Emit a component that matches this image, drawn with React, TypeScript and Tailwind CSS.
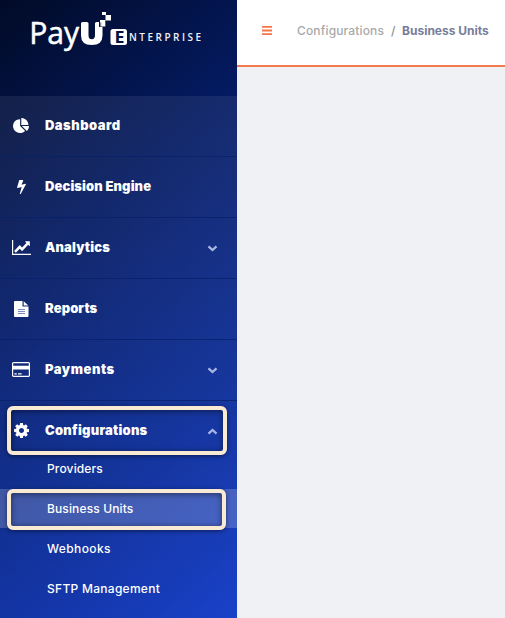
import React from "react";

type IconProps = { className: string; viewBox: string; d: string };

const Icon = ({ className, viewBox, d }: IconProps) => (
  <svg className={className} viewBox={viewBox} fill="currentColor" preserveAspectRatio="none">
    <path d={d} />
  </svg>
);

const PIE =
  "M768 890l546 546q-106 108-247.5 168t-298.5 60q-209 0-385.5-103t-279.5-279.5-103-385.5 103-385.5 279.5-279.5 385.5-103v762zm187 6h773q0 157-60 298.5t-168 247.5zm709-128h-768v-768q209 0 385.5 103t279.5 279.5 103 385.5z";
const BOLT =
  "M1333 566q18 20 7 44l-540 1157q-13 25-42 25-4 0-14-2-17-5-25.5-19t-4.5-30l197-808-406 101q-4 1-12 1-18 0-31-11-18-15-13-39l201-825q4-14 16-23t28-9h328q19 0 32 12.5t13 29.5q0 8-5 18l-171 463 396-98q8-2 12-2 19 0 34 15z";
const LINE =
  "M2048 1536v128h-2048v-1536h128v1408h1920zM1920 288v435q0 21-19.5 29.5t-35.5-7.5l-121-121-633 633q-10 10-23 10t-23-10l-233-233-416 416-192-192 585-585q10-10 23-10t23 10l233 233 464-464-121-121q-16-16-7.5-35.5t29.5-19.5h435q14 0 23 9t9 23z";
const CARD =
  "M1760 128q66 0 113 47t47 113v1216q0 66-47 113t-113 47h-1600q-66 0-113-47t-47-113v-1216q0-66 47-113t113-47h1600zm-1600 128q-13 0-22.5 9.5t-9.5 22.5v224h1664v-224q0-13-9.5-22.5t-22.5-9.5h-1600zm1600 1280q13 0 22.5-9.5t9.5-22.5v-608h-1664v608q0 13 9.5 22.5t22.5 9.5h1600zm-1504-128v-128h256v128h-256zm384 0v-128h384v128h-384z";
const COG =
  "M1152 896q0-106-75-181t-181-75-181 75-75 181 75 181 181 75 181-75 75-181zm512-109v222q0 12-8 23t-20 13l-185 28q-19 54-39 91 35 50 107 138 10 12 10 25t-9 23q-27 37-99 108t-94 71q-12 0-26-9l-138-108q-44 23-91 38-16 136-29 186-7 28-36 28h-222q-14 0-24.5-8.5t-11.5-21.5l-28-184q-49-16-90-37l-141 107q-10 9-25 9-14 0-25-11-126-114-165-168-7-10-7-23 0-12 8-23 15-21 51-66.5t54-70.5q-27-50-41-99l-183-27q-13-2-21-12.5t-8-23.5v-222q0-12 8-23t19-13l186-28q14-46 39-92-40-57-107-138-10-12-10-24 0-10 9-23 26-36 98.5-107.5t94.5-71.5q13 0 26 10l138 107q44-23 91-38 16-136 29-186 7-28 36-28h222q14 0 24.5 8.5t11.5 21.5l28 184q49 16 90 37l142-107q9-9 24-9 13 0 25 10 129 119 165 170 7 8 7 22 0 12-8 23-15 21-51 66.5t-54 70.5q26 50 41 98l183 28q13 2 21 12.5t8 23.5z";

const FileIcon = () => (
  <svg className="h-4 w-[15px]" viewBox="0 0 15 16">
    <path d="M0 1Q0 0 1 0H8.5V5.5H14.5V15Q14.5 16 13.5 16H1Q0 16 0 15Z" fill="#fff" />
    <path d="M9.7 0.2L14.3 4.5H9.7Z" fill="#fff" />
    <path d="M4 8.5H11M4 10.5H11M4 12.5H11" stroke="#7d8bc0" strokeWidth="1" />
  </svg>
);

const Logo = () => (
  <svg className="block h-24 w-[237px]" viewBox="0 0 237 96" fill="#fff">
    <text x="29.2" y="44.4" fontSize="30.5" textLength="50" lengthAdjust="spacingAndGlyphs" className="font-['Open_Sans',sans-serif] font-normal" stroke="#fff" strokeWidth=".5" strokeLinejoin="round">
      Pay
    </text>
    <path d="M81 23.5Q81 22 82.5 22H87Q88.5 22 88.5 23.5V35Q88.5 39.3 91.7 39.3Q95 39.3 95 35V23.5Q95 22 96.5 22H99V27H102.5V35.5Q102.5 45 91.7 45Q81 45 81 35.5Z" />
    <path d="M100 20H105.3V26.5H100Z" />
    <path d="M99.3 22.5H101.3V26.5H99.3Z" fill="#04113f" opacity=".5" />
    <path d="M105.5 15H111V20.5H105.5ZM102 12H106V15H102Z" />
    <rect x="110.5" y="29" width="16.5" height="16" rx="2.5" />
    <text x="114.4" y="42.6" fontSize="15.5" textLength="10" lengthAdjust="spacingAndGlyphs" fill="#04113f" className="font-['Open_Sans',sans-serif] font-bold">
      E
    </text>
    <text x="129" y="40.8" fontSize="10" textLength="72" lengthAdjust="spacing" className="font-['Open_Sans',sans-serif] font-semibold" opacity=".95">
      NTERPRISE
    </text>
  </svg>
);

type Item = { label: string; tracking: string; icon: React.ReactNode; chevron?: "down" | "up" };

const items: Item[] = [
  { label: "Dashboard", tracking: "tracking-[0.48px]", icon: <Icon className="h-[15px] w-4" viewBox="0 0 1728 1664" d={PIE} /> },
  { label: "Decision Engine", tracking: "tracking-[0.1px]", icon: <Icon className="h-[15.5px] w-[9px]" viewBox="440 0 905 1792" d={BOLT} /> },
  { label: "Analytics", tracking: "tracking-[0.15px]", icon: <Icon className="h-[15px] w-[19px]" viewBox="0 128 2048 1536" d={LINE} />, chevron: "down" },
  { label: "Reports", tracking: "tracking-[0.1px]", icon: <FileIcon /> },
  { label: "Payments", tracking: "tracking-[0.55px]", icon: <Icon className="h-[15px] w-[18px]" viewBox="0 128 1920 1536" d={CARD} />, chevron: "down" },
  { label: "Configurations", tracking: "tracking-[0.25px]", icon: <Icon className="h-[15px] w-[15px]" viewBox="128 128 1536 1536" d={COG} />, chevron: "up" },
];

const subItems = [
  { label: "Providers", tracking: "tracking-[0.15px]" },
  { label: "Business Units", tracking: "tracking-[0.13px]", active: true },
  { label: "Webhooks", tracking: "tracking-[0.38px]" },
  { label: "SFTP Management", tracking: "tracking-[0.28px]" },
];

const Chevron = ({ up }: { up: boolean }) => (
  <svg className="mt-px mr-[19px] ml-auto h-[7px] w-[11px]" viewBox="0 0 11 7" fill="none" stroke="#a9b6e4" strokeWidth="2.3">
    <path d={up ? "M1.5 5.7L5.5 2L9.5 5.7" : "M1.5 1.3L5.5 5L9.5 1.3"} />
  </svg>
);

export default function App() {
  return (
    <div className="flex h-[618px] w-[505px] overflow-hidden bg-[#f0f1f5] font-['Inter',sans-serif]">
      <aside className="relative w-[237px] shrink-0 bg-[linear-gradient(140deg,#010a26_0%,#041a60_34%,#0b2b92_66%,#153dc8_100%)] text-white">
        <Logo />
        <nav className="h-[522px] bg-[linear-gradient(rgba(255,255,255,.07),rgba(255,255,255,.02))]">
          {items.map((item) => (
            <div
              key={item.label}
              className={`flex items-center ${item.chevron === "up" ? "h-[60px]" : "h-[61px] border-b border-[#08206c]/80"}`}
            >
              <span className="flex w-[42px] shrink-0 justify-center pb-px">{item.icon}</span>
              <span className={`ml-[3px] text-[13px] font-black whitespace-nowrap ${item.tracking}`}>{item.label}</span>
              {item.chevron && <Chevron up={item.chevron === "up"} />}
            </div>
          ))}
          <div className="-mt-3">
            {subItems.map((s) => (
              <div key={s.label} className="flex h-10 items-start">
                <div className={`flex h-[39px] w-full items-center pl-[47px] text-[12px] font-medium ${s.active ? "bg-white/20" : ""}`}>
                  <span className={`whitespace-nowrap ${s.tracking}`}>{s.label}</span>
                </div>
              </div>
            ))}
          </div>
        </nav>
        <div className="absolute top-[406px] left-[7px] h-[49px] w-[220px] rounded-[6px] border-4 border-[#f9ead4] shadow-[0_1px_4px_rgba(0,0,0,.5),inset_0_1px_6px_rgba(0,0,0,.5)]" />
        <div className="absolute top-[489px] left-[7px] h-[41px] w-[219px] rounded-[6px] border-4 border-[#f9ead4] shadow-[0_1px_4px_rgba(0,0,0,.5),inset_0_1px_6px_rgba(0,0,0,.5)]" />
      </aside>
      <main className="grow">
        <header className="flex h-[67px] items-center border-b-2 border-[#f47b50] bg-white pb-1 pl-[25px] text-[12px]">
          <svg className="h-[9px] w-[10px]" viewBox="0 0 10 9" fill="#f8754a">
            <path d="M0 0H10V1.8H0ZM0 3.6H10V5.4H0ZM0 7.2H10V9H0Z" />
          </svg>
          <span className="ml-[25px] w-[87px] font-medium tracking-[0.15px] whitespace-nowrap text-[#a9a9a9]">Configurations</span>
          <span className="ml-[7px] w-[11px] font-medium text-[#8f8f96]">/</span>
          <span className="font-bold whitespace-nowrap text-[#777d9a]">Business Units</span>
        </header>
      </main>
    </div>
  );
}
